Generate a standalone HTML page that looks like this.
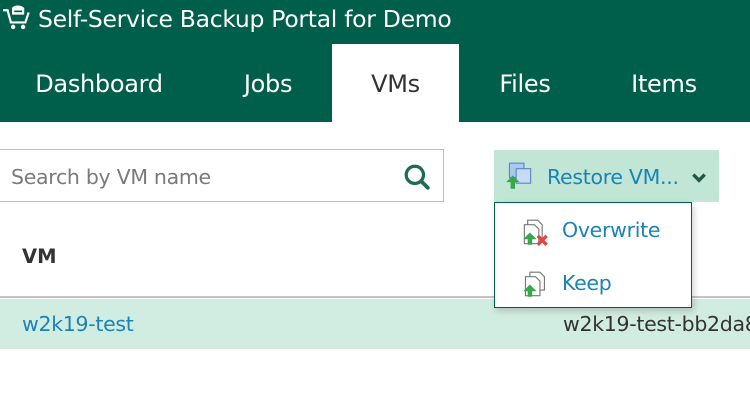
<!DOCTYPE html>
<html><head><style>
*{margin:0;padding:0;box-sizing:border-box}
body{width:750px;height:401px;overflow:hidden;background:#fff;font-family:"DejaVu Sans","Liberation Sans",sans-serif;position:relative}
.hdr{position:absolute;left:0;top:0;width:750px;height:122px;background:#005f4b}
.title{position:absolute;left:38px;top:5px;color:#fff;font-size:23.5px;letter-spacing:-0.3px}
.tab{position:absolute;top:44px;height:80px;line-height:80px;color:#fff;font-size:24px;text-align:center;letter-spacing:-0.3px}
.vms{background:#fff;color:#333;height:78px}
.search{position:absolute;left:-2px;top:149px;width:446px;height:53px;border:1px solid #bdbdbd}
.search span{position:absolute;left:12px;top:15px;color:#7a7a7a;font-size:20.5px;letter-spacing:-0.3px}
.btn{position:absolute;left:494px;top:150px;width:225px;height:52px;background:#c1e6d6}
.btn span{position:absolute;left:53px;top:15px;color:#1b83b5;font-size:20.5px;letter-spacing:-0.3px}
.dd{position:absolute;left:494px;top:202px;width:198px;height:106px;border:1px solid #005f4b;background:#fff;box-shadow:2px 3px 6px rgba(0,0,0,.18);z-index:3}
.dd span{position:absolute;color:#1b83b5;font-size:20.5px;letter-spacing:-0.3px}
.line{position:absolute;left:0;top:296px;width:750px;height:2px;background:#c4c4c4}
.row{position:absolute;left:0;top:299px;width:750px;height:50px;background:#d1ece0;overflow:hidden}
</style></head><body>
<div class="hdr">
<svg style="position:absolute;left:2px;top:4px" width="30" height="28" viewBox="0 0 27 24"><path d="M1 5h4l3 11h13l3-9" fill="none" stroke="#fff" stroke-width="2"/><path d="M9 3c2-3 8-3 11 0v6H9z" fill="#fff"/><path d="M11 6h7" stroke="#005f4b" stroke-width="1.5"/><circle cx="10" cy="20" r="2" fill="#fff"/><circle cx="19" cy="20" r="2" fill="#fff"/></svg>
<div class="title">Self-Service Backup Portal for Demo</div>
<div class="tab" style="left:18px;width:162px">Dashboard</div>
<div class="tab" style="left:225px;width:86px">Jobs</div>
<div class="tab vms" style="left:332px;width:127px">VMs</div>
<div class="tab" style="left:485px;width:80px">Files</div>
<div class="tab" style="left:613px;width:102px">Items</div>
</div>
<div class="search"><span>Search by VM name</span>
<svg style="position:absolute;left:404px;top:13px" width="28" height="28" viewBox="0 0 26 26"><circle cx="11" cy="11" r="8" fill="none" stroke="#1e6b50" stroke-width="3"/><path d="M17 17l6 6" stroke="#1e6b50" stroke-width="3.5" stroke-linecap="round"/></svg></div>
<div class="btn">
<svg style="position:absolute;left:11px;top:12px" width="29" height="29" viewBox="0 0 26 26"><rect x="4" y="1" width="13" height="13" fill="#a9c9ee" stroke="#5a86c4"/><rect x="10" y="6" width="13" height="13" fill="#c6dcf5" stroke="#5a86c4"/><path d="M7 12l-6 6h4v6h4v-6h4z" fill="#36a84a"/></svg>
<span>Restore VM...</span>
<svg style="position:absolute;left:197px;top:22px" width="16" height="12" viewBox="0 0 14 10"><path d="M2 2l5 5 5-5" fill="none" stroke="#1e5a45" stroke-width="3"/></svg>
</div>
<div class="dd">
<svg style="position:absolute;left:26px;top:15px" width="29" height="29" viewBox="0 0 26 26"><path d="M6 2h9l4 4v12H6z" fill="#fff" stroke="#777"/><path d="M3 6h9l4 4v13H3z" fill="#fff" stroke="#777"/><path d="M8 13l-6 6h4v5h4v-5h4z" fill="#36a84a"/><path d="M15 16l8 8M23 16l-8 8" stroke="#e24545" stroke-width="3"/></svg>
<span style="left:67px;top:15px">Overwrite</span>
<svg style="position:absolute;left:26px;top:67px" width="29" height="29" viewBox="0 0 26 26"><path d="M8 2h9l4 4v12H8z" fill="#fff" stroke="#777"/><path d="M4 6h9l4 4v13H4z" fill="#fff" stroke="#777"/><path d="M8 13l-6 6h4v5h4v-5h4z" fill="#36a84a"/></svg>
<span style="left:67px;top:68px">Keep</span>
</div>
<div style="position:absolute;left:22px;top:245px;font-size:19.5px;font-weight:bold;color:#333">VM</div>
<div class="line"></div>
<div class="row">
<span style="position:absolute;left:22px;top:13px;color:#1b83b5;font-size:20.5px;letter-spacing:-0.3px">w2k19-test</span>
<span style="position:absolute;left:563px;top:13px;color:#333;font-size:20.5px;letter-spacing:-0.3px;white-space:nowrap">w2k19-test-bb2da8</span>
</div>
</body></html>
